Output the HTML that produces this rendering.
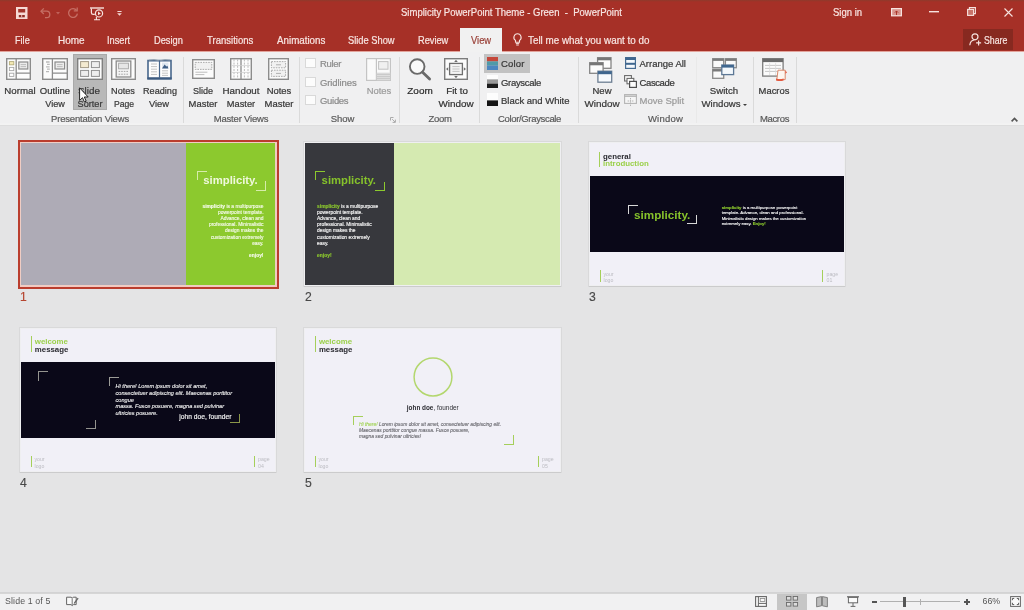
<!DOCTYPE html>
<html lang="en"><head><meta charset="utf-8">
<title>Simplicity PowerPoint Theme - Green - PowerPoint</title>
<style>
*{box-sizing:border-box;margin:0;padding:0}
html,body{width:1024px;height:610px;overflow:hidden}
body{position:relative;background:#e4e4e5;font-family:"Liberation Sans",sans-serif;font-size:9.5px;color:#444;line-height:1}
.a{position:absolute;white-space:nowrap}
.c{position:absolute;white-space:nowrap;text-align:center;transform:translateX(-50%)}
svg{position:absolute;overflow:visible}
/* header */
#hdr{position:absolute;left:0;top:0;width:1024px;height:51px;background:#a63027}
#hdr .t{position:absolute;white-space:nowrap;color:#f8e6e3;font-size:10.3px;transform-origin:0 50%;-webkit-text-stroke-width:.2px}
#tabv{position:absolute;left:460px;top:28px;width:42px;height:24px;background:#f1f1f1}
#share{position:absolute;left:963px;top:29px;width:50px;height:21px;background:#872920}
/* ribbon */
#rib{position:absolute;left:0;top:52px;width:1024px;height:74px;background:linear-gradient(#f0f0f1 0,#f0f0f1 71px,#f4f4f4 72px,#f2f2f2 73px,#dcdcdd 73px,#dedede 74px)}
.sep{position:absolute;top:57px;width:1px;height:66px;background:#dadada}
.lb{color:#383838;font-size:9.5px;line-height:9.5px;-webkit-text-stroke-width:.22px}
.gl{color:#5a5a5a;font-size:9.5px;-webkit-text-stroke-width:.2px}
.dis{color:#9c9c9c}
.cb{position:absolute;left:305px;width:10.5px;height:10px;background:#fcfcfc;border:1px solid #d9d9d9}
/* status */
#st{position:absolute;left:0;top:592px;width:1024px;height:18px;background:linear-gradient(#d3d3d4 0,#d3d3d4 1px,#d6d6d6 1px,#d6d6d6 2px,#f1f1f2 2px)}
/* slides */
.sl{position:absolute;overflow:hidden;width:256px;height:144px;background:#f1f0f7;border:1px solid #efeff1;box-shadow:0 1px 0 #cbcbcc,0 0 0 1px #d9d9da}
.num{position:absolute;font-size:12.2px;color:#484848;-webkit-text-stroke-width:.15px}
.bk{width:10px;height:9.5px}
.h1{font-size:11.3px;font-weight:bold;letter-spacing:0}
.h2{font-size:7.85px;font-weight:bold;line-height:8.1px}
.p1{font-size:4.93px;line-height:6.05px}
.p1 b,.p3 b,.p5 b{font-weight:bold}
.p3{font-size:4.3px;line-height:5.4px}
.p4{font-size:5.6px;line-height:6.7px;font-style:italic}
.p5{font-size:4.93px;line-height:6px;font-style:italic}
.ft{font-size:5.2px;line-height:6.3px;color:#bcbcc2}
#root{position:absolute;left:0;top:0;width:1024px;height:610px;overflow:hidden;will-change:transform;transform:translateZ(0)}
</style></head><body><div id="root">
<!--HDR-->
<div id="hdr">
<div class="a" style="left:0;top:0;width:1024px;height:2px;background:linear-gradient(#8e3a2c,#a63027)"></div>
<!-- quick access toolbar -->
<svg style="left:16px;top:7.200px" width="11.500" height="12" viewBox="0 0 11.500 12"><rect x="0" y="0" width="11.500" height="12" fill="#f6dad5"/><rect x="2.200" y="2" width="7" height="3.500" fill="#a2352c"/><rect x="2.800" y="8" width="6" height="2.300" fill="#8f2e26"/><rect x="5.200" y="8" width="1" height="2.300" fill="#e9b9b2"/></svg>
<svg style="left:40px;top:8px" width="12" height="10" viewBox="0 0 12 10"><path d="M1 3.2h5.6a3.2 3.2 0 0 1 0 6.4h-1.6" fill="none" stroke="#c56e64" stroke-width="1.3"/><path d="M3.8 0.4L1 3.2l2.8 2.8" fill="none" stroke="#c56e64" stroke-width="1.3"/></svg>
<svg style="left:55.500px;top:11.500px" width="4" height="2.500" viewBox="0 0 4 2.500"><path d="M0 0h4L2 2.500z" fill="#c0625a"/></svg>
<svg style="left:67px;top:7px" width="12" height="12" viewBox="0 0 12 12"><path d="M9.600 3.400A4.400 4.400 0 1 0 10.400 6.600" fill="none" stroke="#c56e64" stroke-width="1.300"/><path d="M10.200 0.400V3.800H6.800" fill="none" stroke="#c56e64" stroke-width="1.300"/></svg>
<svg style="left:90px;top:7px" width="14" height="14" viewBox="0 0 14 14"><path d="M0 1h14" stroke="#f7e3df" stroke-width="1.4"/><path d="M1.4 1.5v4.2q0 1.6 1.8 1.6h1.6" fill="none" stroke="#f7e3df" stroke-width="1.2"/><circle cx="9" cy="6.4" r="3.6" fill="none" stroke="#f7e3df" stroke-width="1.2"/><path d="M8 4.6l2.8 1.8L8 8.2z" fill="#f7e3df"/><path d="M6.4 10v2.4M4 12.8h6" stroke="#f7e3df" stroke-width="1.1"/></svg>
<svg style="left:117px;top:10.500px" width="5" height="5" viewBox="0 0 5 5"><path d="M0.400 0.500h4.200" stroke="#f3d9d5" stroke-width="1"/><path d="M0.200 2.200h4.600L2.500 4.800z" fill="#f3d9d5"/></svg>
<div class="t" style="left:401px;top:8px;transform:scaleX(0.924)">Simplicity PowerPoint Theme - Green &nbsp;- &nbsp;PowerPoint</div>
<div class="t" style="left:833.4px;top:8px;transform:scaleX(0.924)">Sign in</div>
<!-- window controls -->
<svg style="left:891px;top:7.8px" width="11" height="8.4" viewBox="0 0 11 8.4"><rect x=".6" y=".6" width="9.800" height="7.200" fill="#d9968d" stroke="#f7e3df" stroke-width="1.200"/><path d="M5.500 3v4M3.900 4.600l1.600-1.600 1.600 1.600" fill="none" stroke="#a93126" stroke-width="1"/></svg>
<svg style="left:929px;top:11px" width="10" height="2" viewBox="0 0 10 2"><rect width="10" height="1.4" fill="#f7e3df"/></svg>
<svg style="left:966.5px;top:7.3px" width="9" height="9" viewBox="0 0 9 9"><path d="M2.4 2.2V.6h6v6H6.8" fill="none" stroke="#f7e3df" stroke-width="1.1"/><rect x=".6" y="2.4" width="6" height="6" fill="#c9746a" stroke="#f7e3df" stroke-width="1.1"/></svg>
<svg style="left:1003.500px;top:7.800px" width="9" height="9" viewBox="0 0 9 9"><path d="M.5.500l8 8M8.500.500l-8 8" stroke="#f7e3df" stroke-width="1.100"/></svg>
<!-- tabs -->
<div class="t" style="left:14.6px;top:35.6px;transform:scaleX(0.886)">File</div>
<div class="t" style="left:58.0px;top:35.6px;transform:scaleX(0.968)">Home</div>
<div class="t" style="left:107.4px;top:35.6px;transform:scaleX(0.897)">Insert</div>
<div class="t" style="left:154.3px;top:35.6px;transform:scaleX(0.901)">Design</div>
<div class="t" style="left:206.8px;top:35.6px;transform:scaleX(0.926)">Transitions</div>
<div class="t" style="left:276.6px;top:35.6px;transform:scaleX(0.950)">Animations</div>
<div class="t" style="left:348.4px;top:35.6px;transform:scaleX(0.904)">Slide Show</div>
<div class="t" style="left:417.6px;top:35.6px;transform:scaleX(0.897)">Review</div>
<div id="tabv"></div>
<div class="t" style="left:470.7px;top:35.6px;transform:scaleX(0.908);color:#9a4138">View</div>
<svg style="left:513px;top:33px" width="9" height="13" viewBox="0 0 9 13"><path d="M4.5.8a3.6 3.6 0 0 0-2 6.6v1.8h4V7.4a3.6 3.6 0 0 0-2-6.6z" fill="none" stroke="#f7e3df" stroke-width="1.1"/><path d="M2.8 10.6h3.4M3.2 12h2.6" stroke="#f7e3df" stroke-width="1"/></svg>
<div class="t" style="left:528.0px;top:35.6px;transform:scaleX(0.956)">Tell me what you want to do</div>
<div id="share"></div>
<svg style="left:969px;top:33px" width="13" height="13" viewBox="0 0 13 13"><circle cx="6" cy="3.8" r="3" fill="none" stroke="#f7e3df" stroke-width="1.2"/><path d="M.8 12.2c.4-3.2 2.2-5 4.4-5.2" fill="none" stroke="#f7e3df" stroke-width="1.2"/><path d="M9.6 7.4v5M7.1 9.9h5" stroke="#f7e3df" stroke-width="1.2"/></svg>
<div class="t" style="left:984.2px;top:35.6px;transform:scaleX(0.851)">Share</div>
</div>
<div class="a" style="left:0;top:51px;width:1024px;height:3px;background:linear-gradient(#e3a49c 0,#e3a49c 1px,#fbe2df 1px,#fbe2df 2px,#f6ebea 2px,#f6ebea 3px)"></div>
<div class="a" style="left:460px;top:50px;width:42px;height:4px;background:#f1f1f1"></div>
<!--/HDR-->
<!--RIB-->
<div id="rib"></div>
<!-- highlighted buttons -->
<div class="a" style="left:73px;top:54px;width:34px;height:56px;background:#b8b8b8;border:1px solid #a9a9a9"></div>
<div class="a" style="left:484px;top:54px;width:46px;height:19px;background:#c2c2c2"></div>
<!-- separators -->
<div class="sep" style="left:183px"></div><div class="sep" style="left:299px"></div><div class="sep" style="left:399px"></div>
<div class="sep" style="left:479px"></div><div class="sep" style="left:578px"></div><div class="sep" style="left:696px;background:#e9e9e9"></div>
<div class="sep" style="left:753px"></div><div class="sep" style="left:796px"></div>
<!-- Presentation Views icons -->
<svg style="left:6px;top:58px" width="25" height="22" viewBox="0 0 25 22"><rect x=".7" y=".7" width="23.6" height="20.6" fill="#fcfcfc" stroke="#8c8c8c" stroke-width="1.4"/><path d="M10.2 1v20M10.5 15.2H24" stroke="#8c8c8c" stroke-width="1.3"/><rect x="3.4" y="3.6" width="4.4" height="3.2" fill="#f3e9b4" stroke="#b5ad7a" stroke-width=".9"/><rect x="3.4" y="9.4" width="4.4" height="3.2" fill="#fff" stroke="#a8a8a8" stroke-width=".9"/><rect x="3.4" y="15.2" width="4.4" height="3.2" fill="#fff" stroke="#a8a8a8" stroke-width=".9"/><rect x="12.8" y="4" width="9" height="7" fill="#ececec" stroke="#8c8c8c" stroke-width="1.2"/><path d="M14.6 6.6h5.4M14.6 8.6h5.4" stroke="#b0b0b0" stroke-width=".8"/></svg>
<svg style="left:42px;top:58px" width="26" height="22" viewBox="0 0 26 22"><rect x=".7" y=".7" width="24.6" height="20.6" fill="#fcfcfc" stroke="#8c8c8c" stroke-width="1.4"/><path d="M10.4 1v20M10.7 15.2H25" stroke="#8c8c8c" stroke-width="1.3"/><path d="M4 4h3.6M5 6.4h2.8M4 8.8h3.6M5 11.2h2.8M4 13.6h3" stroke="#b9b9b9" stroke-width="1.3"/><rect x="13" y="4" width="9.6" height="7" fill="#ececec" stroke="#8c8c8c" stroke-width="1.2"/><path d="M15 6.6h5.6M15 8.6h5.6" stroke="#b0b0b0" stroke-width=".8"/></svg>
<svg style="left:77px;top:58px" width="26" height="22" viewBox="0 0 26 22"><rect x=".7" y=".7" width="24.6" height="20.6" fill="#fbfbfb" stroke="#808080" stroke-width="1.4"/><rect x="3.6" y="3.6" width="8" height="6" fill="#f4ead0" stroke="#a39a86" stroke-width="1"/><rect x="14.4" y="3.6" width="8" height="6" fill="#eee" stroke="#909090" stroke-width="1"/><rect x="3.6" y="12.4" width="8" height="6" fill="#eee" stroke="#909090" stroke-width="1"/><rect x="14.4" y="12.4" width="8" height="6" fill="#eee" stroke="#909090" stroke-width="1"/></svg>
<svg style="left:111px;top:58px" width="25" height="22" viewBox="0 0 25 22"><rect x=".7" y=".7" width="23.6" height="20.6" fill="#fcfcfc" stroke="#8c8c8c" stroke-width="1.4"/><rect x="5.2" y="3" width="14.6" height="16" fill="#f4f4f4" stroke="#8c8c8c" stroke-width="1.3"/><rect x="7.6" y="5.2" width="9.8" height="5.6" fill="#e6e6e6" stroke="#a5a5a5" stroke-width=".9"/><path d="M7.6 13.4h9.8M7.6 16.2h9.8" stroke="#a5a5a5" stroke-width="1" stroke-dasharray="1.6 1"/></svg>
<svg style="left:147px;top:58px" width="25" height="22" viewBox="0 0 25 22"><path d="M1 2.600H24V20.600H1z" fill="#fdfdfd" stroke="#48678c" stroke-width="1.600"/><path d="M1.800 2.200Q7 1 12.500 2.800Q18 1 23.200 2.200" fill="none" stroke="#8a97a8" stroke-width="1"/><path d="M0.400 20.400H24.600" stroke="#3d5b80" stroke-width="2.200"/><path d="M12.500 2.800V20" stroke="#48678c" stroke-width="1.200"/><path d="M4 6h6M4 8.600h6M4 11.200h6M4 13.800h6M4 16.400h6M15 12.800h6M15 15.200h6M15 17.400h6" stroke="#c4c4c4" stroke-width="1"/><rect x="15" y="4.600" width="6.400" height="5.800" fill="#dfe7f0"/><path d="M15 10.400l2.600-3.800 1.800 2 1-.9 1 2.700z" fill="#3f5f86"/></svg>
<!-- Master Views icons -->
<svg style="left:192px;top:59px" width="23" height="20" viewBox="0 0 23 20"><rect x=".7" y=".7" width="21.600" height="18.600" fill="#fcfcfc" stroke="#8c8c8c" stroke-width="1.400"/><rect x="3.200" y="3.400" width="16.600" height="7" fill="#f0f0f0" stroke="#a2a2a2" stroke-width=".9" stroke-dasharray="1.600 1"/><path d="M3.400 13.200h12M3.400 15.600h9" stroke="#bdbdbd" stroke-width="1"/></svg>
<svg style="left:230px;top:58px" width="22" height="22" viewBox="0 0 22 22"><rect x=".7" y=".7" width="20.600" height="20.600" fill="#fcfcfc" stroke="#8c8c8c" stroke-width="1.400"/><path d="M11 1v20" stroke="#8c8c8c" stroke-width="1.300"/><path d="M4 1.400v19.200M7.600 1.400v19.200M14.400 1.400v19.200M18 1.400v19.200" stroke="#b4b4b4" stroke-width=".9" stroke-dasharray="2 1.200"/><path d="M1.400 7.600h19.200M1.400 14.400h19.200" stroke="#cfcfcf" stroke-width=".8"/></svg>
<svg style="left:268px;top:58px" width="21" height="22" viewBox="0 0 21 22"><rect x=".7" y=".7" width="19.600" height="20.600" fill="#fcfcfc" stroke="#8c8c8c" stroke-width="1.400"/><rect x="3.400" y="3.600" width="14.200" height="6.200" fill="#f1f1f1" stroke="#a2a2a2" stroke-width=".9" stroke-dasharray="1.600 1"/><rect x="3.400" y="12.200" width="14.200" height="6.200" fill="#f1f1f1" stroke="#a2a2a2" stroke-width=".9" stroke-dasharray="1.600 1"/><path d="M8 6.800h5M8 15.400h5" stroke="#b0b0b0" stroke-width="1"/></svg>
<!-- Show -->
<div class="cb" style="top:58px"></div><div class="cb" style="top:77px"></div><div class="cb" style="top:95px"></div>
<svg style="left:366px;top:58px" width="25" height="23" viewBox="0 0 25 23"><rect x=".6" y=".6" width="23.800" height="21.800" fill="#fafafa" stroke="#c4c4c4" stroke-width="1.200"/><path d="M10.400 1v21" stroke="#c4c4c4" stroke-width="1.200"/><rect x="12.600" y="3.600" width="9.400" height="7.600" fill="#f0f0f0" stroke="#c0c0c0" stroke-width="1"/><rect x="10.800" y="14.600" width="13.400" height="7.600" fill="#dedede"/><path d="M11 16.400h13M11 18.600h13M11 20.600h13" stroke="#c2c2c2" stroke-width=".8"/></svg>
<svg style="left:390px;top:117px" width="6" height="6" viewBox="0 0 6 6"><path d="M.5 3.500V.5h3" fill="none" stroke="#ababab" stroke-width="1"/><path d="M2.200 2.200L5 5M5.400 2.600v2.800H2.600" fill="none" stroke="#ababab" stroke-width="1"/></svg>
<!-- Zoom -->
<svg style="left:408px;top:58px" width="24" height="23" viewBox="0 0 24 23"><circle cx="9.200" cy="8.600" r="7.300" fill="#fafafa" stroke="#6a6a6a" stroke-width="1.900"/><path d="M14.600 14.200l7 6.800" stroke="#6a6a6a" stroke-width="2.800" stroke-linecap="round"/></svg>
<svg style="left:444px;top:58px" width="24" height="22" viewBox="0 0 24 22"><rect x=".7" y=".7" width="22.600" height="20.600" fill="#fcfcfc" stroke="#7c7c7c" stroke-width="1.400"/><rect x="5.600" y="5.400" width="12.800" height="11.200" fill="#f4f4f4" stroke="#6f6f6f" stroke-width="1.300"/><path d="M8.400 8.600h7.200M8.400 11h7.200M8.400 13.400h7.200" stroke="#bdbdbd" stroke-width=".9"/><path d="M12 1.800l1.800 2.200h-3.600zM12 20.200l1.800-2.200h-3.600zM2 11l2.200-1.800v3.600zM22 11l-2.200-1.800v3.600z" fill="#6f6f6f"/></svg>
<!-- Color/Grayscale icons -->
<svg style="left:487px;top:57px" width="11" height="13" viewBox="0 0 11 13"><rect width="11" height="4.400" fill="#c4473a"/><rect y="4.400" width="11" height="4.200" fill="#4f9aa8"/><rect y="8.600" width="11" height="4.400" fill="#4b86c0"/></svg>
<svg style="left:487px;top:75px" width="11" height="13" viewBox="0 0 11 13"><rect width="11" height="4.400" fill="#fdfdfd"/><rect y="4.400" width="11" height="4.200" fill="#9a9a9a"/><rect y="8.600" width="11" height="4.400" fill="#1c1c1c"/></svg>
<svg style="left:487px;top:93px" width="11" height="13" viewBox="0 0 11 13"><rect width="11" height="7.400" fill="#fdfdfd"/><rect y="7.400" width="11" height="5.600" fill="#151515"/></svg>
<!-- Window icons -->
<svg style="left:589px;top:57px" width="24" height="26" viewBox="0 0 24 26"><rect x="8.600" y=".7" width="13.400" height="10.600" fill="#fcfcfc" stroke="#858585" stroke-width="1.300"/><rect x="8.600" y=".7" width="13.400" height="2.600" fill="#777"/><rect x=".7" y="5.700" width="13.400" height="10.600" fill="#fcfcfc" stroke="#858585" stroke-width="1.300"/><rect x=".7" y="5.700" width="13.400" height="2.600" fill="#777"/><rect x="8.900" y="14.200" width="13.800" height="11" fill="#f7fafd" stroke="#6e7f92" stroke-width="1.300"/><rect x="8.900" y="14.200" width="13.800" height="3" fill="#3f678f"/></svg>
<svg style="left:625px;top:57px" width="11" height="12" viewBox="0 0 11 12"><rect x=".6" y=".6" width="9.800" height="10.800" fill="#f4f8fc" stroke="#456b92" stroke-width="1.200"/><rect x=".6" y=".6" width="9.800" height="2.400" fill="#3f678f"/><rect x=".6" y="5.800" width="9.800" height="2" fill="#3f678f"/></svg>
<svg style="left:624px;top:75px" width="13" height="13" viewBox="0 0 13 13"><rect x=".6" y=".6" width="6.800" height="5.400" fill="#fcfcfc" stroke="#6a6a6a" stroke-width="1.100"/><rect x="3" y="3.400" width="6.800" height="5.400" fill="#fcfcfc" stroke="#6a6a6a" stroke-width="1.100"/><rect x="5.600" y="6.400" width="6.800" height="6" fill="#fcfcfc" stroke="#4e4e4e" stroke-width="1.200"/></svg>
<svg style="left:624px;top:94px" width="13" height="12" viewBox="0 0 13 12"><rect x=".6" y=".6" width="11.800" height="8.800" fill="#f6f6f6" stroke="#b4b4b4" stroke-width="1.100"/><path d="M.6 2.200h11.800" stroke="#b4b4b4" stroke-width="1.400"/><path d="M6.500 4v8M3.600 7h6" stroke="#b4b4b4" stroke-width="1" stroke-dasharray="1.400 .8"/></svg>
<svg style="left:712px;top:58px" width="25" height="21" viewBox="0 0 25 21"><rect x=".7" y=".7" width="11" height="9" fill="#fafafa" stroke="#8a8a8a" stroke-width="1.300"/><rect x=".7" y=".7" width="11" height="2.200" fill="#7a7a7a"/><rect x="13.400" y=".7" width="10.900" height="9" fill="#fafafa" stroke="#8a8a8a" stroke-width="1.300"/><rect x="13.400" y=".7" width="10.900" height="2.200" fill="#7a7a7a"/><rect x=".7" y="11.300" width="11" height="9" fill="#fafafa" stroke="#8a8a8a" stroke-width="1.300"/><rect x=".7" y="11.300" width="11" height="2.200" fill="#7a7a7a"/><rect x="9.800" y="7" width="11.800" height="9.600" fill="#f4f8fc" stroke="#5d7896" stroke-width="1.300"/><rect x="9.800" y="7" width="11.800" height="2.600" fill="#3f678f"/></svg>
<svg style="left:762px;top:58px" width="26" height="23" viewBox="0 0 26 23"><rect x=".7" y=".7" width="20.400" height="17.400" fill="#fbfbfb" stroke="#7d7d7d" stroke-width="1.300"/><rect x=".7" y=".7" width="20.400" height="3.400" fill="#6a6a6a"/><path d="M3 7.400h16M3 10.400h16M3 13.400h16" stroke="#c6c6c6" stroke-width="1"/><path d="M7.600 5v12M13.600 5v12" stroke="#dadada" stroke-width=".8"/><path d="M16 12.200h7.200v9.400H14.800z" fill="#fdf6f0" stroke="#d98a6d" stroke-width="1"/><path d="M14 20.400q4 1.600 7.600 0v2q-3.600 1.400-7.600 0z" fill="#e2593f"/><path d="M23.400 12.600l1.600 2-1.600 1.200" fill="#e2593f"/></svg>
<svg style="left:1011px;top:117px" width="7" height="5" viewBox="0 0 7 5"><path d="M.6 4.400L3.500 1.400 6.400 4.400" fill="none" stroke="#555" stroke-width="1.600"/></svg>
<!-- button labels -->
<div class="c lb" style="left:19.6px;top:86px;transform:translateX(-50%) scaleX(1.022)">Normal</div>
<div class="c lb" style="left:55.1px;top:86px;transform:translateX(-50%) scaleX(1.007)">Outline</div>
<div class="c lb" style="left:55.0px;top:99.1px;transform:translateX(-50%) scaleX(0.955)">View</div>
<div class="c lb" style="left:89.0px;top:86px;transform:translateX(-50%) scaleX(1.037)">Slide</div>
<div class="c lb" style="left:89.5px;top:99.1px;transform:translateX(-50%) scaleX(0.962)">Sorter</div>
<div class="c lb" style="left:123.2px;top:86px;transform:translateX(-50%) scaleX(0.963)">Notes</div>
<div class="c lb" style="left:123.8px;top:99.1px;transform:translateX(-50%) scaleX(0.906)">Page</div>
<div class="c lb" style="left:159.6px;top:86px;transform:translateX(-50%) scaleX(0.958)">Reading</div>
<div class="c lb" style="left:159.4px;top:99.1px;transform:translateX(-50%) scaleX(0.984)">View</div>
<div class="c lb" style="left:202.8px;top:86px;transform:translateX(-50%) scaleX(0.951)">Slide</div>
<div class="c lb" style="left:203.2px;top:99.1px;transform:translateX(-50%) scaleX(0.992)">Master</div>
<div class="c lb" style="left:240.5px;top:86px;transform:translateX(-50%) scaleX(1.030)">Handout</div>
<div class="c lb" style="left:241.1px;top:99.1px;transform:translateX(-50%) scaleX(0.975)">Master</div>
<div class="c lb" style="left:278.5px;top:86px;transform:translateX(-50%) scaleX(0.991)">Notes</div>
<div class="c lb" style="left:278.9px;top:99.1px;transform:translateX(-50%) scaleX(0.995)">Master</div>
<div class="c lb dis" style="left:379.1px;top:86px;transform:translateX(-50%) scaleX(0.991)">Notes</div>
<div class="c lb" style="left:420.1px;top:86px;color:#2e2e2e;transform:translateX(-50%) scaleX(1.046)">Zoom</div>
<div class="c lb" style="left:456.8px;top:86px;color:#333;transform:translateX(-50%) scaleX(1.023)">Fit to</div>
<div class="c lb" style="left:456.2px;top:99.1px;color:#333;transform:translateX(-50%) scaleX(1.039)">Window</div>
<div class="c lb" style="left:602.0px;top:86px;transform:translateX(-50%) scaleX(1.000)">New</div>
<div class="c lb" style="left:601.8px;top:99.1px;transform:translateX(-50%) scaleX(1.039)">Window</div>
<div class="c lb" style="left:724.1px;top:86px;transform:translateX(-50%) scaleX(1.015)">Switch</div>
<div class="c lb" style="left:721.0px;top:99.1px;transform:translateX(-50%) scaleX(1.012)">Windows</div>
<div class="c lb" style="left:774.3px;top:86px;transform:translateX(-50%) scaleX(0.989)">Macros</div>
<div class="a" style="left:743.2px;top:103.6px;width:0;height:0;border-left:2.2px solid transparent;border-right:2.2px solid transparent;border-top:2.6px solid #3c3c3c"></div>
<!-- small items -->
<div class="a lb dis" style="left:320px;top:59px;color:#8c8c8c;letter-spacing:-0.30px">Ruler</div>
<div class="a lb dis" style="left:320px;top:78.1px;color:#8c8c8c;letter-spacing:-0.10px">Gridlines</div>
<div class="a lb dis" style="left:320px;top:96.3px;color:#8c8c8c;letter-spacing:-0.30px">Guides</div>
<div class="a lb" style="left:501px;top:59px;letter-spacing:0.20px">Color</div>
<div class="a lb" style="left:501px;top:78.1px;letter-spacing:-0.32px">Grayscale</div>
<div class="a lb" style="left:501px;top:96.3px;letter-spacing:-0.01px">Black and White</div>
<div class="a lb" style="left:639.500px;top:59px;letter-spacing:0.00px">Arrange All</div>
<div class="a lb" style="left:639.500px;top:78.1px;letter-spacing:-0.38px">Cascade</div>
<div class="a lb dis" style="left:639.500px;top:96.3px;letter-spacing:0.02px">Move Split</div>
<!-- group labels -->
<div class="c gl" style="left:90px;top:114px;letter-spacing:-0.18px">Presentation Views</div>
<div class="c gl" style="left:241px;top:114px;letter-spacing:-0.19px">Master Views</div>
<div class="c gl" style="left:342.500px;top:114px;letter-spacing:-0.12px">Show</div>
<div class="c gl" style="left:440px;top:114px;letter-spacing:-0.26px">Zoom</div>
<div class="c gl" style="left:529.500px;top:114px;letter-spacing:-0.33px">Color/Grayscale</div>
<div class="c gl" style="left:665.500px;top:114px;letter-spacing:0.24px">Window</div>
<div class="c gl" style="left:774.500px;top:114px;letter-spacing:-0.33px">Macros</div>
<!-- mouse cursor -->
<svg style="left:79px;top:87px" width="10" height="16" viewBox="0 0 10 16"><path d="M.6.800v12.600l2.900-2.700 1.900 4.300 1.800-.8-1.900-4.200h3.900z" fill="#fff" stroke="#222" stroke-width="1"/></svg>
<!--/RIB-->
<!--SLIDES-->
<!-- slide 1 (selected) -->
<div class="a" style="left:18px;top:140px;width:261px;height:149px;background:#f2c8c0;border:2px solid #ba3d2e"></div>
<div class="sl" style="left:20px;top:142px;width:256px;box-shadow:none;border-color:#f0cdc4;background:#aeabb6">
 <div class="a" style="left:165px;top:0;width:90px;height:144px;background:#8cc92e"></div>
 <div class="a bk" style="left:176px;top:27.500px;border-left:1px solid #d6ecaa;border-top:1px solid #d6ecaa"></div>
 <div class="a bk" style="left:235px;top:38.200px;border-right:1px solid #d6ecaa;border-bottom:1px solid #d6ecaa"></div>
 <div class="a h1" style="left:182.300px;top:32px;color:#eff8dc">simplicity.</div>
 <div class="a p1" style="right:11.5px;top:61.3px;text-align:right;color:#f7fbee;-webkit-text-stroke-width:0.12px"><b>simplicity</b> is a multipurpose<br>powerpoint template.<br>Advance, clean and<br>professional. Minimalistic<br>design makes the<br>customization extremely<br>easy.<br><br><b>enjoy!</b></div>
</div>
<div class="num" style="left:20px;top:291.2px;color:#b5442f">1</div>
<!-- slide 2 -->
<div class="sl" style="left:304px;top:142px;width:257px;background:#d5eab1">
 <div class="a" style="left:0;top:0;width:89px;height:142px;background:#37383d"></div>
 <div class="a bk" style="left:10.300px;top:27.800px;border-left:1px solid #8cc92e;border-top:1px solid #8cc92e"></div>
 <div class="a bk" style="left:69.700px;top:38.500px;border-right:1px solid #8cc92e;border-bottom:1px solid #8cc92e"></div>
 <div class="a h1" style="left:16.600px;top:31.8px;color:#86c22b">simplicity.</div>
 <div class="a p1" style="left:12.100px;top:61.3px;color:#f4f4f4;-webkit-text-stroke-width:0.15px"><b style="color:#8cc92e">simplicity</b> is a multipurpose<br>powerpoint template.<br>Advance, clean and<br>professional. Minimalistic<br>design makes the<br>customization extremely<br>easy.<br><br><b style="color:#8cc92e">enjoy!</b></div>
</div>
<div class="num" style="left:305px;top:291.2px">2</div>
<!-- slide 3 -->
<div class="sl" style="left:589px;top:142px">
 <div class="a" style="left:0;top:33.300px;width:256px;height:75.400px;background:#0a0818"></div>
 <div class="a" style="left:9.300px;top:9px;width:1px;height:15.300px;background:#a5cf5a"></div>
 <div class="a h2" style="left:13px;top:9.9px;line-height:7.6px;color:#2a2a30">general<br><span style="color:#9bd04a">introduction</span></div>
 <div class="a bk" style="left:38.300px;top:61.600px;border-left:1px solid #d8d8d8;border-top:1px solid #d8d8d8"></div>
 <div class="a bk" style="left:97px;top:71.900px;border-right:1px solid #d8d8d8;border-bottom:1px solid #d8d8d8"></div>
 <div class="a h1" style="left:44px;top:66.2px;font-size:11.7px;color:#86c22b">simplicity.</div>
 <div class="a p3" style="left:131.700px;top:61.7px;color:#f4f4f4;-webkit-text-stroke-width:0.13px"><b style="color:#8cc92e">simplicity</b> is a multipurpose powerpoint<br>template. Advance, clean and professional.<br>Minimalistic design makes the customization<br>extremely easy. <b style="color:#8cc92e">Enjoy!</b></div>
 <div class="a" style="left:9.600px;top:127px;width:1px;height:11.6px;background:#a5cf5a"></div>
 <div class="a ft" style="left:13.500px;top:128px">your<br>logo</div>
 <div class="a" style="left:232.400px;top:127px;width:1px;height:11.6px;background:#a5cf5a"></div>
 <div class="a ft" style="left:236.600px;top:127.6px">page<br>01</div>
</div>
<div class="num" style="left:589px;top:291.2px">3</div>
<!-- slide 4 -->
<div class="sl" style="left:20px;top:328px">
 <div class="a" style="left:0;top:33px;width:256px;height:76px;background:#0a0818"></div>
 <div class="a" style="left:9.600px;top:7px;width:1px;height:16px;background:#a5cf5a"></div>
 <div class="a h2" style="left:13.800px;top:8.9px;color:#2a2a30"><span style="color:#9bd04a">welcome</span><br>message</div>
 <div class="a bk" style="left:16.8px;top:42.4px;border-left:1px solid #94948f;border-top:1px solid #94948f"></div>
 <div class="a bk" style="left:64.500px;top:90.6px;border-right:1px solid #94948f;border-bottom:1px solid #94948f"></div>
 <div class="a bk" style="left:87.6px;top:47.8px;border-left:1px solid #9c9c97;border-top:1px solid #9c9c97"></div>
 <div class="a bk" style="left:208.500px;top:84.8px;border-right:1px solid #8a9648;border-bottom:1px solid #8a9648"></div>
 <div class="a p4" style="left:94.500px;top:54.1px;color:#f0f0f0;-webkit-text-stroke-width:0.12px">Hi there! Lorem ipsum dolor sit amet,<br>consectetuer adipiscing elit. Maecenas porttitor<br>congue<br>massa. Fusce posuere, magna sed pulvinar<br>ultricies posuere.</div>
 <div class="a" style="left:158.300px;top:84.5px;font-size:6.7px;color:#f4f4f4;-webkit-text-stroke-width:0.15px">john doe, founder</div>
 <div class="a" style="left:10px;top:127.300px;width:1px;height:10.700px;background:#a5cf5a"></div>
 <div class="a ft" style="left:13.500px;top:127.3px">your<br>logo</div>
 <div class="a" style="left:233px;top:127.300px;width:1px;height:10.700px;background:#a5cf5a"></div>
 <div class="a ft" style="left:237px;top:127.3px">page<br>04</div>
</div>
<div class="num" style="left:20px;top:476.8px">4</div>
<!-- slide 5 -->
<div class="sl" style="left:304px;top:328px;width:257px">
 <div class="a" style="left:10px;top:7px;width:1px;height:16px;background:#a5cf5a"></div>
 <div class="a h2" style="left:13.900px;top:8.7px;color:#2a2a30"><span style="color:#9bd04a">welcome</span><br>message</div>
 <svg style="left:108px;top:27.700px" width="40" height="40" viewBox="0 0 40 40"><circle cx="20" cy="20" r="18.900" fill="none" stroke="#b3d76e" stroke-width="1.500"/></svg>
 <div class="a" style="left:101.800px;top:76.4px;font-size:6.4px;color:#2c2c32"><b>john doe</b>, founder</div>
 <div class="a bk" style="left:47.600px;top:86.900px;border-left:1px solid #a5cf5a;border-top:1px solid #a5cf5a"></div>
 <div class="a bk" style="left:199px;top:106.100px;border-right:1px solid #a5cf5a;border-bottom:1px solid #a5cf5a"></div>
 <div class="a p5" style="left:54px;top:92.6px;color:#5c5c62;-webkit-text-stroke-width:0.08px"><span style="color:#9bd04a">Hi there!</span> Lorem ipsum dolor sit amet, consectetuer adipiscing elit.<br>Maecenas porttitor congue massa. Fusce posuere,<br>magna sed pulvinar ultricies!</div>
 <div class="a" style="left:10px;top:127.300px;width:1px;height:10.700px;background:#a5cf5a"></div>
 <div class="a ft" style="left:13.500px;top:127.3px">your<br>logo</div>
 <div class="a" style="left:233px;top:127.300px;width:1px;height:10.700px;background:#a5cf5a"></div>
 <div class="a ft" style="left:237px;top:127.3px">page<br>05</div>
</div>
<div class="num" style="left:305px;top:476.8px">5</div>
<!--/SLIDES-->
<!--STATUS-->
<div id="st"></div>
<div class="a" style="left:5px;top:596.500px;font-size:8.800px;letter-spacing:.12px;color:#555">Slide 1 of 5</div>
<svg style="left:66px;top:596px" width="13" height="10" viewBox="0 0 13 10"><path d="M.6 1.200h4.600l1 1 1-1h3v7.400H7.400l-1.200 1-1.200-1H.6z" fill="#fafafa" stroke="#666" stroke-width="1"/><path d="M6.200 2.400v6.800" stroke="#666" stroke-width=".9"/><path d="M8 6.600l3.600-4.800 1 .8-3.600 4.800-1.200.4z" fill="#666"/></svg>
<div class="a" style="left:777px;top:593.5px;width:30px;height:17px;background:#c6c6c6"></div>
<svg style="left:755px;top:596px" width="12" height="11" viewBox="0 0 12 11"><rect x=".6" y=".6" width="10.800" height="9.800" fill="#fafafa" stroke="#666" stroke-width="1.100"/><path d="M3.400.6v9.800M3.400 7.400h8" stroke="#666" stroke-width="1"/><rect x="5.200" y="2.400" width="4.600" height="3" fill="none" stroke="#888" stroke-width=".8"/></svg>
<svg style="left:785.500px;top:596px" width="13" height="11" viewBox="0 0 13 11"><rect x=".5" y=".5" width="4.400" height="3.600" fill="#dcdcdc" stroke="#6a6a6a" stroke-width=".9"/><rect x="7.200" y=".5" width="4.400" height="3.600" fill="#dcdcdc" stroke="#6a6a6a" stroke-width=".9"/><rect x=".5" y="6.500" width="4.400" height="3.600" fill="#dcdcdc" stroke="#6a6a6a" stroke-width=".9"/><rect x="7.200" y="6.500" width="4.400" height="3.600" fill="#dcdcdc" stroke="#6a6a6a" stroke-width=".9"/></svg>
<svg style="left:816px;top:596px" width="12" height="11" viewBox="0 0 12 11"><path d="M.6 1.600L5.600.6v9.200l-5 1z" fill="#bdbdbd" stroke="#777" stroke-width=".9"/><path d="M11.400 1.600L6.400.6v9.200l5 1z" fill="#bdbdbd" stroke="#777" stroke-width=".9"/></svg>
<svg style="left:847px;top:596px" width="12" height="11" viewBox="0 0 12 11"><path d="M0 .8h12" stroke="#666" stroke-width="1.200"/><rect x="1.400" y="1.400" width="9.200" height="5.400" fill="#fafafa" stroke="#666" stroke-width="1"/><path d="M6 7v3M3.600 10.400h4.800" stroke="#666" stroke-width="1"/></svg>
<div class="a" style="left:872px;top:601px;width:5px;height:1.500px;background:#555"></div>
<div class="a" style="left:880px;top:601px;width:80px;height:1px;background:#b0b0b0"></div>
<div class="a" style="left:920px;top:598.500px;width:1px;height:6px;background:#b0b0b0"></div>
<div class="a" style="left:903px;top:597px;width:3px;height:9.500px;background:#555"></div>
<div class="a" style="left:964px;top:601px;width:6px;height:1.500px;background:#555"></div>
<div class="a" style="left:966.300px;top:598.500px;width:1.500px;height:6.500px;background:#555"></div>
<div class="a" style="left:982.500px;top:596.500px;font-size:8.800px;color:#555">66%</div>
<svg style="left:1010px;top:596px" width="11" height="11" viewBox="0 0 11 11"><rect x=".6" y=".6" width="9.800" height="9.800" fill="#fafafa" stroke="#666" stroke-width="1"/><path d="M2.400 4.200V2.400h1.800M6.800 2.400h1.800v1.800M8.600 6.800v1.800H6.800M4.200 8.600H2.400V6.800" fill="none" stroke="#555" stroke-width="1"/></svg>
<!--/STATUS-->
</div></body></html>
